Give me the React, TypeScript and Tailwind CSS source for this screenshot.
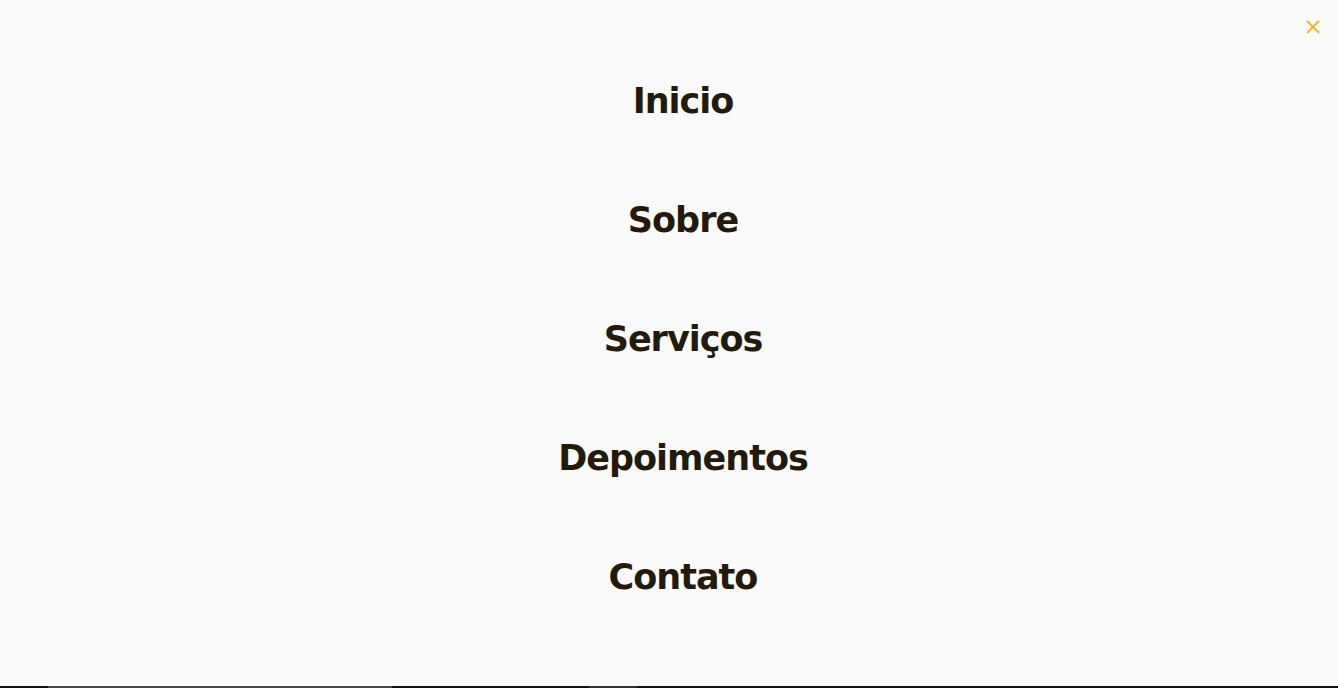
import { X } from "lucide-react";

const links = ["Inicio", "Sobre", "Serviços", "Depoimentos", "Contato"];

export default function App() {
  return (
    <div className="w-full h-[688px] flex flex-col bg-[#fafafa] overflow-hidden">
      <nav className="relative flex-1 flex flex-col items-center pt-[42px] pl-[28px]">
        <button className="absolute top-[16px] right-[14px] text-[#fbb03b]">
          <X size={22} strokeWidth={2.2} />
        </button>
        <ul className="flex flex-col items-center">
          {links.map((l) => (
            <li key={l} className="h-[119px] flex items-center">
              <a className="text-[35px] font-bold text-[#231a0c] font-['DejaVu_Sans',sans-serif] tracking-[-1px]">
                {l}
              </a>
            </li>
          ))}
        </ul>
      </nav>
      <div className="flex h-[2px] shrink-0">
        <div className="w-[48px] bg-[#111]" />
        <div className="w-[344px] bg-[#474747]" />
        <div className="w-[197px] bg-[#111]" />
        <div className="w-[48px] bg-[#333]" />
        <div className="flex-1 bg-[#111]" />
      </div>
    </div>
  );
}
